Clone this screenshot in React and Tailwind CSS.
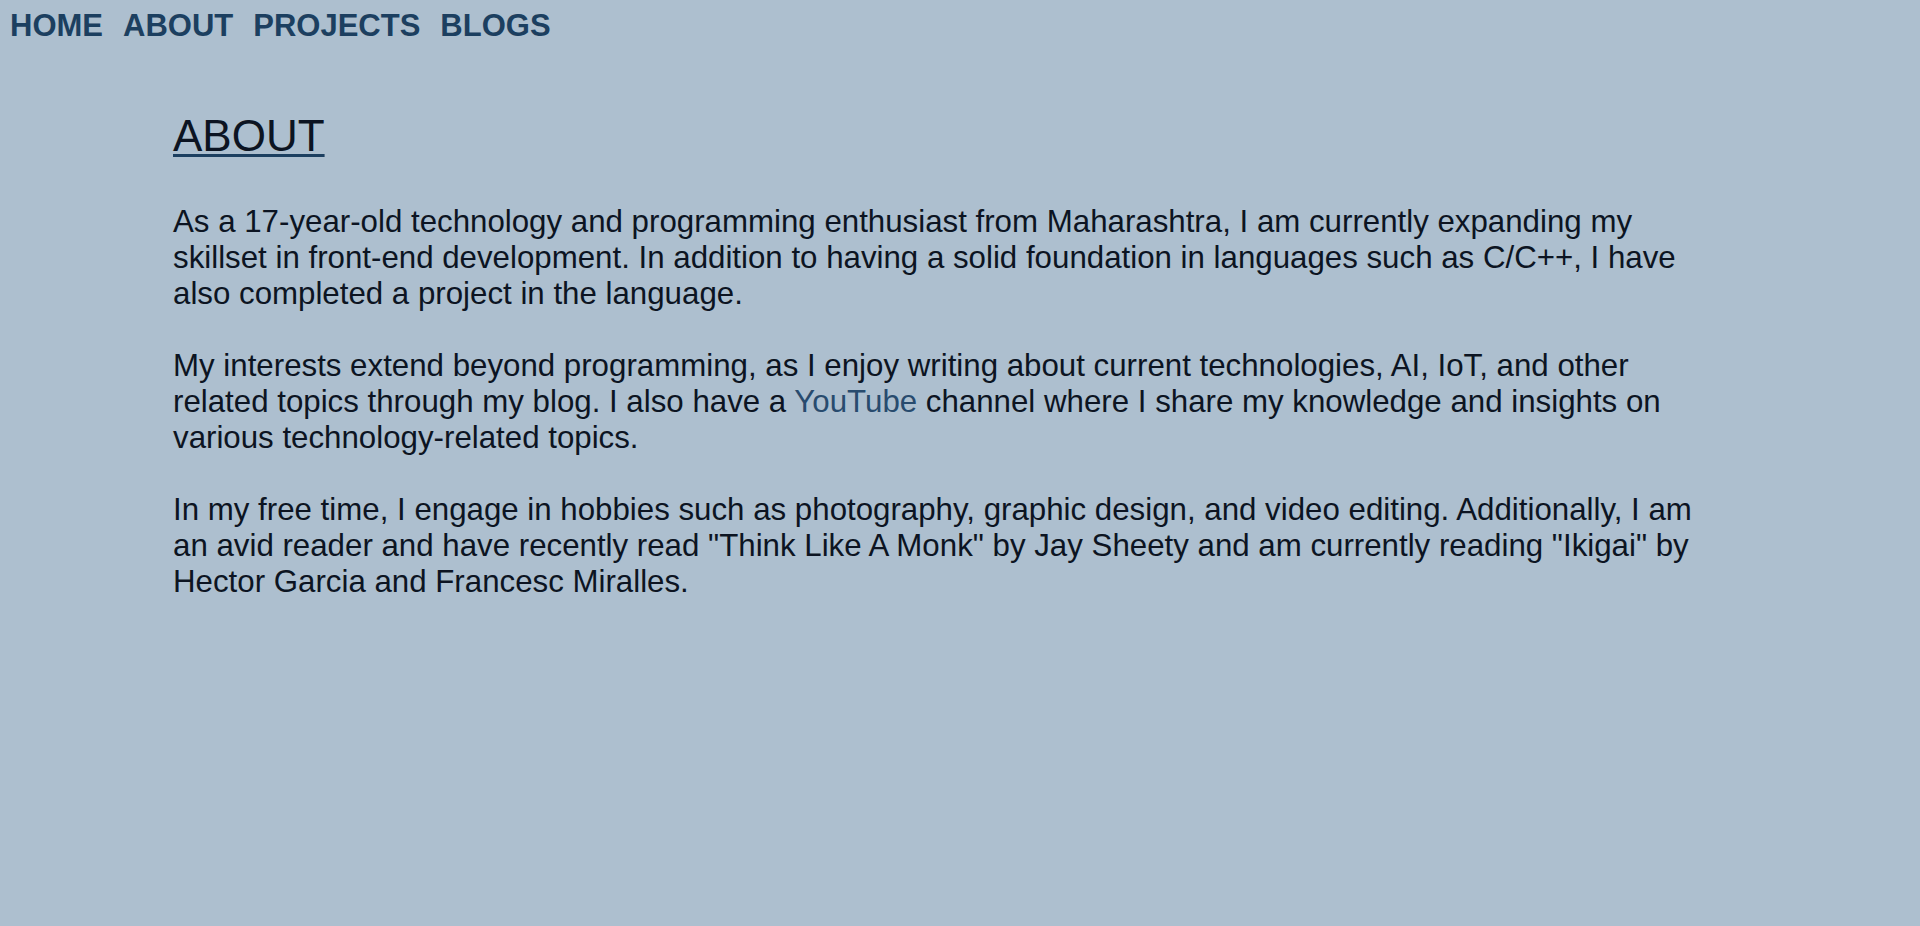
import React from "react";

export default function App() {
  const font = { fontFamily: '"Liberation Sans", Arial, sans-serif' };
  return (
    <div className="min-h-screen w-full bg-[#adbfcf]" style={font}>
      <nav className="flex gap-[20px] pl-[10px] pt-[8px] text-[31px] font-bold leading-[normal] text-[#1c3f60]">
        <a href="#" className="no-underline">HOME</a>
        <a href="#" className="no-underline">ABOUT</a>
        <a href="#" className="no-underline">PROJECTS</a>
        <a href="#" className="no-underline">BLOGS</a>
      </nav>
      <main className="ml-[173px] w-[1536px]">
        <h1 className="mt-[67px] text-[44px] font-normal leading-[normal] text-[#0c1422] underline decoration-[#1c3f60] decoration-[3px] underline-offset-[3px]">
          ABOUT
        </h1>
        <p className="mt-[43px] text-[31.25px] leading-[normal] text-[#0c1422]">
          As a 17-year-old technology and programming enthusiast from Maharashtra, I am currently expanding my skillset in front-end development. In addition to having a solid foundation in languages such as C/C++, I have also completed a project in the language.
          <br />
          <br />
          My interests extend beyond programming, as I enjoy writing about current technologies, AI, IoT, and other related topics through my blog. I also have a{" "}
          <a href="#" className="text-[#284b6e]">YouTube</a> channel where I share my knowledge and insights on various technology-related topics.
          <br />
          <br />
          In my free time, I engage in hobbies such as photography, graphic design, and video editing. Additionally, I am an avid reader and have recently read "Think Like A Monk" by Jay Sheety and am currently reading "Ikigai" by Hector Garcia and Francesc Miralles.
        </p>
      </main>
    </div>
  );
}
